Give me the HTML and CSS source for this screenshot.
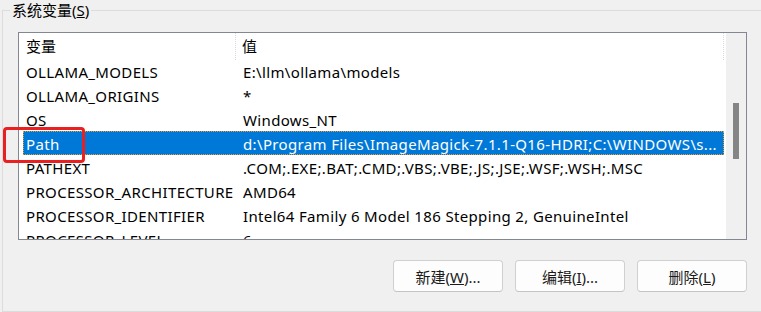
FILE: index.html
```html
<!DOCTYPE html>
<html lang="zh-CN">
<head>
<meta charset="utf-8">
<title>系统变量</title>
<link rel="stylesheet" href="styles.css">
</head>
<body>
<div class="group">
  <span class="legend">系统变量(<u>S</u>)</span>
  <div class="listbox">
    <div class="list">
      <div class="header">
        <div class="col1">变量</div>
        <div class="col2">值</div>
      </div>
      <div class="row"><div class="col1">OLLAMA_MODELS</div><div class="col2">E:\llm\ollama\models</div></div>
      <div class="row"><div class="col1">OLLAMA_ORIGINS</div><div class="col2">*</div></div>
      <div class="row"><div class="col1">OS</div><div class="col2">Windows_NT</div></div>
      <div class="row selected"><div class="col1">Path</div><div class="col2">d:\Program Files\ImageMagick-7.1.1-Q16-HDRI;C:\WINDOWS\s...</div></div>
      <div class="row"><div class="col1">PATHEXT</div><div class="col2">.COM;.EXE;.BAT;.CMD;.VBS;.VBE;.JS;.JSE;.WSF;.WSH;.MSC</div></div>
      <div class="row"><div class="col1">PROCESSOR_ARCHITECTURE</div><div class="col2">AMD64</div></div>
      <div class="row"><div class="col1">PROCESSOR_IDENTIFIER</div><div class="col2">Intel64 Family 6 Model 186 Stepping 2, GenuineIntel</div></div>
      <div class="row"><div class="col1">PROCESSOR_LEVEL</div><div class="col2">6</div></div>
    </div>
    <div class="scrollbar"><div class="thumb"></div></div>
  </div>
  <div class="buttons">
    <button class="btn">新建(<u>W</u>)...</button>
    <button class="btn">编辑(<u>I</u>)...</button>
    <button class="btn">删除(<u>L</u>)</button>
  </div>
  <div class="highlight"></div>
</div>
</body>
</html>
```
FILE: styles.css
```css
html, body {
  margin: 0;
  padding: 0;
  background: #f0f0f0;
  width: 761px;
  height: 312px;
  overflow: hidden;
}
body {
  font-family: "Noto Sans", "Noto Sans CJK SC", sans-serif;
  font-size: 15px;
  color: #000;
}
.group {
  position: relative;
  margin: 10px -20px 0 2px;
  border: 1px solid #dcdcdc;
  padding: 21px 0 0 15px;
  box-sizing: border-box;
  height: 302px;
}
.legend {
  position: absolute;
  top: -11px;
  left: 7px;
  padding: 0 2px;
  background: #f0f0f0;
  line-height: 20px;
  color: #000;
}
.listbox {
  width: 729px;
  height: 208px;
  box-sizing: border-box;
  border: 1px solid #828790;
  background: #fff;
  display: flex;
  overflow: hidden;
}
.list {
  flex: 1;
  overflow: hidden;
  display: flex;
  flex-direction: column;
  padding-left: 4px;
  padding-right: 2px;
}
.header, .row {
  display: flex;
  flex: none;
  white-space: nowrap;
  align-items: center;
}
.header {
  height: 26px;
  padding-bottom: 1px;
  box-sizing: border-box;
}
.row {
  height: 24px;
  box-sizing: border-box;
  letter-spacing: 0.35px;
  padding-top: 1px;
}
.col1 {
  width: 220px;
  padding-left: 3px;
  box-sizing: border-box;
  flex: none;
  overflow: hidden;
}
.col2 {
  flex: 1;
  overflow: hidden;
}
.header .col1 {
  width: 213px;
  border-right: 1px dotted #d9d9d9;
  height: 27px;
  line-height: 27px;
  margin-top: 1px;
}
.header .col2 {
  padding-left: 6px;
  border-right: 1px dotted #d9d9d9;
  height: 27px;
  line-height: 27px;
  margin-top: 1px;
}
.row.selected {
  background: #0078d7;
  color: #fff;
  outline: 1px dotted #e89a2c;
  outline-offset: -1px;
}
.scrollbar {
  width: 20px;
  flex: none;
  background: #f0f0f0;
  padding: 70px 0 0 7px;
  box-sizing: border-box;
}
.thumb {
  width: 6px;
  height: 56px;
  background: #858585;
}
.buttons {
  display: flex;
  gap: 12px;
  margin: 20px 0 0 375px;
}
.btn {
  width: 110px;
  height: 32px;
  background: #fdfdfd;
  border: 1px solid #d0d0d0;
  border-bottom-color: #c4c4c4;
  border-radius: 4px;
  font-family: "Noto Sans", "Noto Sans CJK SC", sans-serif;
  font-size: 15px;
  color: #1a1a1a;
  padding: 0;
}
.highlight {
  position: absolute;
  left: 0;
  top: 116px;
  width: 82px;
  height: 36px;
  box-sizing: border-box;
  border: 3px solid #ea1f1f;
  border-radius: 4px;
}
```
